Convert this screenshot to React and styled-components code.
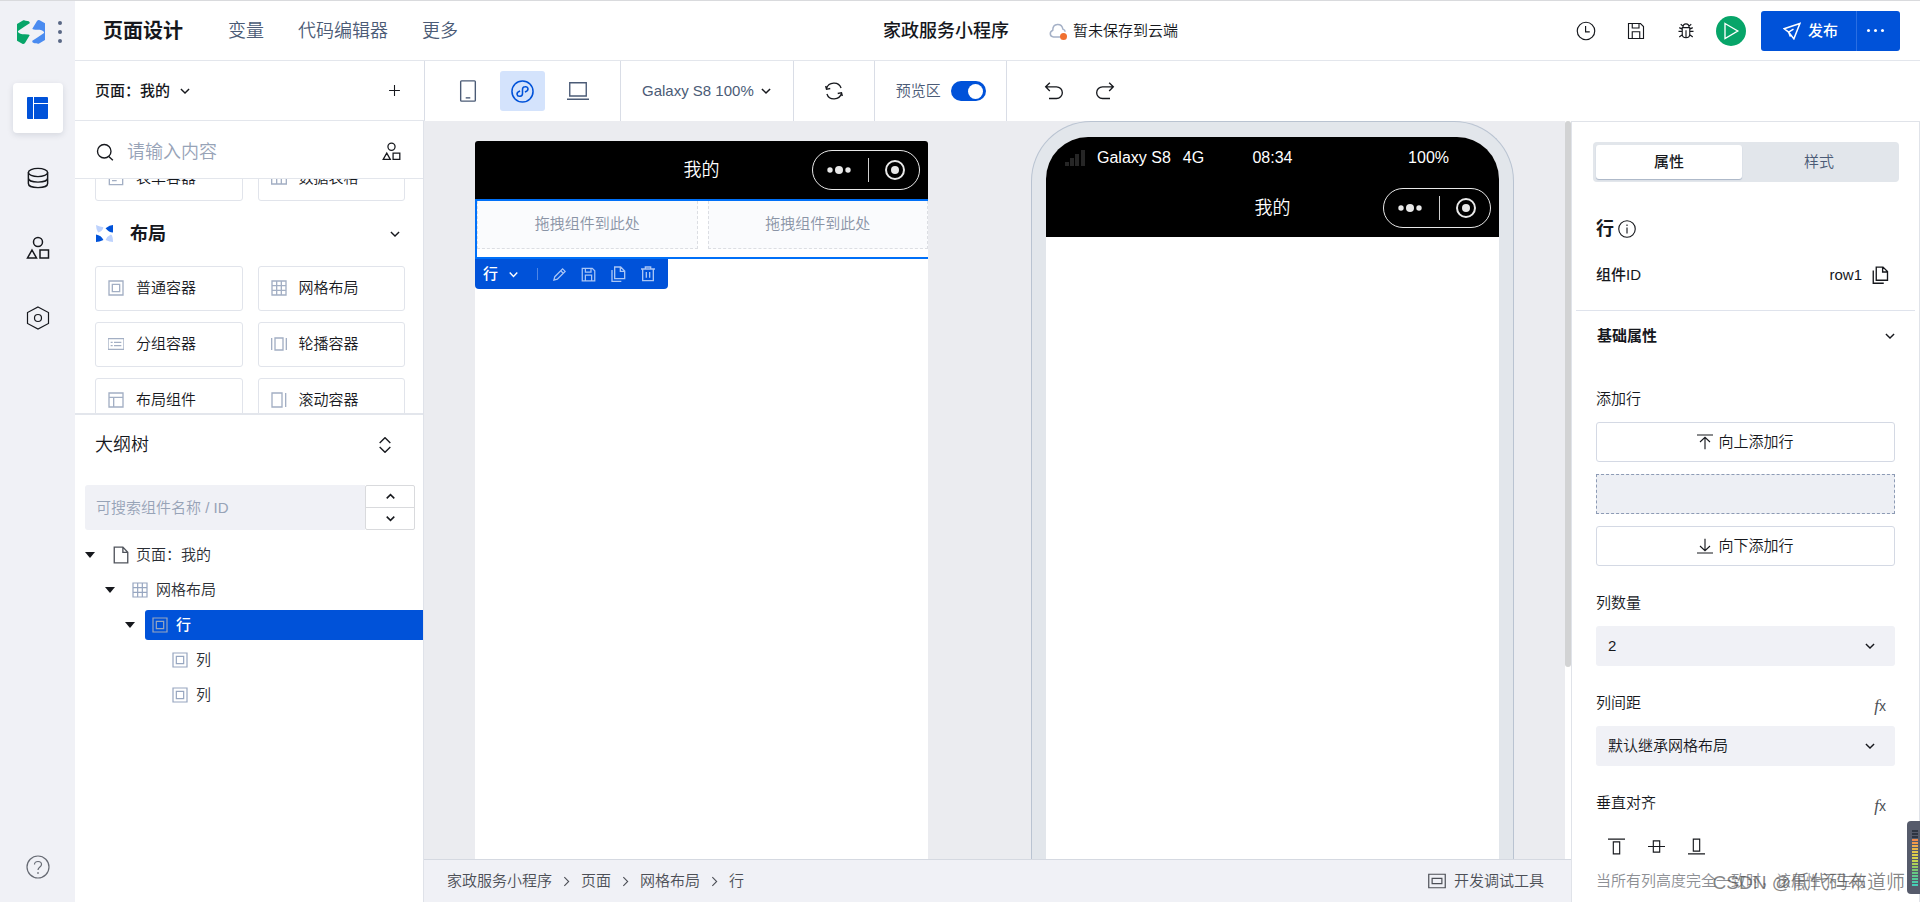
import { useEffect, useRef, useState } from "react";
import styled, { createGlobalStyle } from "styled-components";

const PARTIAL_ROW = [
  { name: "表单容器", icon: "form" },
  { name: "数据表格", icon: "table" },
];

const LAYOUT_ITEMS = [
  { name: "普通容器", icon: "box" },
  { name: "网格布局", icon: "grid" },
  { name: "分组容器", icon: "group" },
  { name: "轮播容器", icon: "carousel" },
  { name: "布局组件", icon: "layout" },
  { name: "滚动容器", icon: "scroll" },
];

const TREE = [
  { id: "page", name: "页面：我的", icon: "file", depth: 0, open: true },
  { id: "grid", name: "网格布局", icon: "grid", depth: 1, open: true },
  { id: "row1", name: "行", icon: "box", depth: 2, open: true },
  { id: "col1", name: "列", icon: "box", depth: 3 },
  { id: "col2", name: "列", icon: "box", depth: 3 },
];

const CRUMBS = ["家政服务小程序", "页面", "网格布局", "行"];

const METER = [
  "#2f3542", "#2f3542", "#2f3542", "#f08a4b", "#f09a4b", "#efac4b", "#e8b84a",
  "#e2c84a", "#dccf4b", "#d8d34c", "#c6d650", "#aed158", "#94cc62", "#7cc871",
  "#66c883", "#5fca8d", "#56cb97", "#4bcca8", "#45cdb6",
];

// every drawing sits on a 24 x 24 grid
const SHAPES = {
  database: (
    <>
      <ellipse cx="12" cy="6" rx="10.500" ry="4.500" />
      <path d="M1.500 6v12c0 2.500 4 4.500 10.500 4.500s10.500-2 10.500-4.500V6M1.500 12c0 2.500 4 4.500 10.500 4.500s10.500-2 10.500-4.500" />
    </>
  ),
  shapes: (
    <>
      <circle cx="12" cy="6" r="4.500" />
      <path d="M6 14l4.500 8h-9zM14 14h8.500v8H14z" />
    </>
  ),
  hexagon: (
    <>
      <path d="M12 1l10.500 5.500v11L12 23 1.500 17.500v-11z" />
      <circle cx="12" cy="12" r="3.500" />
    </>
  ),
  help: (
    <>
      <circle cx="12" cy="12" r="11" />
      <path d="M8.500 9.500c0-4 7-4 7 0 0 2.500-3.500 2.500-3.500 5.500M12 17v2" />
    </>
  ),
  search: (
    <>
      <circle cx="11" cy="11" r="9" />
      <path d="M17 18l5.500 5" />
    </>
  ),
  down: <path d="M5 8.500l7 7 7-7" />,
  up: <path d="M5 15.500l7-7 7 7" />,
  right: <path d="M8 4l8 8-8 8" />,
  plus: <path d="M12 2v20M2 12h20" />,
  updown: <path d="M4 9l8-8 8 8M4 15l8 8 8-8" />,
  phone: (
    <>
      <rect x="4" y="1" width="16" height="22" rx="1" />
      <path d="M9.500 19.500h5" />
    </>
  ),
  mini: (
    <>
      <circle cx="12" cy="12" r="11" />
      <path d="M9.500 11.500c-5 1.500-3.500 6 0 5.500 1.700-.3 2.500-1.500 2.500-3V10c0-1.700 1-3 2.500-3 3.500-.5 5 4 0 5.500" />
    </>
  ),
  laptop: <path d="M3 3h18v14.500H3zM0 21h24" />,
  refresh: <path d="M3 9C5.500 1 17.500 0 20.500 8.500M2 6l1 4 4.500-1M21 15c-2.500 8-14.500 9-17.500.5M22 18l-1-4-4.500 1" />,
  undo: <path d="M7 2L2 7l5 5M2.500 7H15a7 7 0 0 1 0 14H6" />,
  redo: <path d="M17 2l5 5-5 5M21.500 7H9a7 7 0 0 0 0 14h9" />,
  clock: (
    <>
      <circle cx="12" cy="12" r="10.500" />
      <path d="M11.500 6v7h5" />
    </>
  ),
  save: <path d="M2 2h16l4 4v16H2zM7 2v6h9V2M7 22v-9h10v9" />,
  bug: (
    <path d="M7 7.500h10v8.500c0 3-2 5-5 5s-5-2-5-5zM12 11v10M8 7c0-6 8-6 8 0M5 3l3 2.500M19 3l-3 2.500M2 12.500h5M17 12.500h5M3 7.500l4 2M21 7.500l-4 2M3 20l4-3M21 20l-4-3" />
  ),
  send: <path d="M22.500 2L1.500 9l6 4.500L14.500 22.500zM7.500 13.500L14 9.500M7.500 13.500l2.500 6" />,
  play: <path d="M4 2l17 10L4 22z" />,
  cloud: <path d="M15 20H6c-5-.5-6-6.500-1-9C5 1 17 1 18.500 9.500c2 .7 3 2 3 3.500" />,
  info: (
    <>
      <circle cx="12" cy="12" r="11" />
      <path d="M12 10v8M12 6v2" />
    </>
  ),
  copy: <path d="M7 1.500h9l6 6V19H7zM15.500 1.500v6.500H22M3 6v17h14" />,
  pencil: <path d="M3 21l1.500-5.500L17 3l4 4L8.500 19.500zM14 6l4 4" />,
  trash: <path d="M1.500 4.500h21M8 4.500V1.500h8v3M4 4.500V22h16V4.500M9.500 9v8.500M14.500 9v8.500" />,
  file: <path d="M3 1.500h11.500l6.500 7V22.500H3zM14.500 1.500v7H21" />,
  form: <path d="M2 2h20v20H2zM6 8h12M6 12h12M6 16h7" />,
  table: <path d="M1 3h22v18H1zM1 9h22M8.500 9v12M15.500 9v12" />,
  box: <path d="M1.500 1.500h21v21h-21zM6.500 6.500h11v11h-11z" />,
  grid: <path d="M1.500 1.500h21v21h-21zM1.500 8.500h21M1.500 15.500h21M8.500 1.500v21M15.500 1.500v21" />,
  group: <path d="M0 4h24v16H0zM4 9.500h3M9 9.500h11M4 14.500h3M9 14.500h11" />,
  carousel: <path d="M6 3h12v18H6zM1 3v18M23 3v18" />,
  layout: <path d="M1.500 1.500h21v21h-21zM1.500 8h21M8.500 8v14.500" />,
  scroll: <path d="M1.500 1.500h15v21h-15zM22 1.500v21" />,
  addUp: <path d="M0 1.500h24M12 23V5M4.500 12L12 5l7.500 7" />,
  addDown: <path d="M0 22.500h24M12 1v18M4.500 12l7.500 7 7.500-7" />,
  alignTop: <path d="M0 1.500h24M7.500 5.500h9v17h-9z" />,
  alignMiddle: <path d="M0 12h24M7.500 4h9v16h-9z" />,
  alignBottom: <path d="M0 22.500h24M7.500 1.500h9v17h-9z" />,
  devtool: <path d="M1 3h22v18H1zM5.500 8.500h13v7h-13z" />,
};

function Icon({ name, size = 16, weight = 2 }) {
  return (
    <S.Svg width={size} height={size} viewBox="0 0 24 24" strokeWidth={weight} aria-hidden="true">
      {SHAPES[name]}
    </S.Svg>
  );
}

function LogoHalf() {
  return (
    <path d="M0 12L19 1q3-1 7 1q14 0 12 8L24 19 3 33q-2 6 13 10q20-1 22 3L24 69q-4 4-8 2L0 62z" />
  );
}

function Rail() {
  return (
    <S.Rail>
      <S.Brand>
        <svg width="28" height="24" viewBox="0 0 84 72" aria-hidden="true">
          <g fill="#07a569"><LogoHalf /></g>
          <g fill="#4a8bf0" transform="rotate(180 42 36)"><LogoHalf /></g>
        </svg>
        <S.Dots><i /><i /><i /></S.Dots>
      </S.Brand>
      <S.RailButton $active aria-label="页面设计">
        <svg width="21" height="22" viewBox="0 0 21 22" aria-hidden="true">
          <path d="M1 0h5v22H1q-1 0-1-1V1q0-1 1-1zM7 0h13q1 0 1 1v5H7zM7 7h14v14q0 1-1 1H7z" fill="#0052d9" />
        </svg>
      </S.RailButton>
      <S.RailButton aria-label="数据源"><Icon name="database" size={22} weight={1.6} /></S.RailButton>
      <S.RailButton aria-label="组件库"><Icon name="shapes" size={24} weight={1.5} /></S.RailButton>
      <S.RailButton aria-label="设置"><Icon name="hexagon" size={24} weight={1.2} /></S.RailButton>
      <S.RailHelp aria-label="帮助"><Icon name="help" size={24} weight={1.2} /></S.RailHelp>
    </S.Rail>
  );
}

function Header() {
  return (
    <S.Header>
      <S.Nav>
        <S.NavLink href="#design" $active>页面设计</S.NavLink>
        <S.NavLink href="#vars">变量</S.NavLink>
        <S.NavLink href="#code">代码编辑器</S.NavLink>
        <S.NavLink href="#more">更多</S.NavLink>
      </S.Nav>
      <S.Project>
        <h1>家政服务小程序</h1>
        <S.CloudState>
          <S.Cloud><Icon name="cloud" size={18} /></S.Cloud>
          暂未保存到云端
        </S.CloudState>
      </S.Project>
      <S.Actions>
        <S.IconButton aria-label="历史"><Icon name="clock" size={20} weight={1.4} /></S.IconButton>
        <S.IconButton aria-label="保存"><Icon name="save" size={18} weight={1.5} /></S.IconButton>
        <S.IconButton aria-label="调试"><Icon name="bug" size={18} weight={1.5} /></S.IconButton>
        <S.PlayButton aria-label="预览"><Icon name="play" size={18} weight={1.8} /></S.PlayButton>
        <S.Publish>
          <button><Icon name="send" size={18} /> 发布</button>
          <button aria-label="更多操作"><S.WhiteDots><i /><i /><i /></S.WhiteDots></button>
        </S.Publish>
      </S.Actions>
    </S.Header>
  );
}

function Toolbar() {
  const [preview, setPreview] = useState(true);
  return (
    <S.Toolbar>
      <S.Devices>
        <S.Device aria-label="手机"><Icon name="phone" size={22} weight={1.5} /></S.Device>
        <S.Device $active aria-label="小程序"><Icon name="mini" size={23} weight={1.6} /></S.Device>
        <S.Device aria-label="电脑"><Icon name="laptop" size={22} weight={1.5} /></S.Device>
      </S.Devices>
      <S.ToolGroup>
        <S.DeviceName>Galaxy S8 100% <Icon name="down" size={14} weight={2.6} /></S.DeviceName>
      </S.ToolGroup>
      <S.ToolGroup>
        <S.IconButton aria-label="刷新"><Icon name="refresh" size={20} weight={1.6} /></S.IconButton>
      </S.ToolGroup>
      <S.ToolGroup>
        <S.SwitchLabel>
          预览区
          <S.Switch type="checkbox" checked={preview} onChange={() => setPreview(!preview)} />
        </S.SwitchLabel>
      </S.ToolGroup>
      <S.History>
        <S.IconButton aria-label="撤销"><Icon name="undo" size={20} weight={1.6} /></S.IconButton>
        <S.IconButton aria-label="重做"><Icon name="redo" size={20} weight={1.6} /></S.IconButton>
      </S.History>
    </S.Toolbar>
  );
}

function Library() {
  const listRef = useRef(null);

  useEffect(() => {
    listRef.current.scrollTop = 23;
  }, []);

  return (
    <>
      <S.SearchRow>
        <Icon name="search" size={18} weight={1.8} />
        <input type="text" aria-label="搜索组件" placeholder="请输入内容" />
        <S.IconButton aria-label="组件分类"><Icon name="shapes" size={19} weight={1.6} /></S.IconButton>
      </S.SearchRow>
      <S.Library ref={listRef}>
        <S.Cards>
          {PARTIAL_ROW.map((item) => (
            <S.Card key={item.name}><Icon name={item.icon} size={16} />{item.name}</S.Card>
          ))}
        </S.Cards>
        <S.SectionTitle>
          <svg width="17" height="17" viewBox="0 0 16 16" aria-hidden="true">
            <path d="M0 0q4 2 7 2-1 4-5 5Q0 4 0 0zM16 16q0-6-2-7-4 2-5 5 4 2 7 2z" fill="#bdd2fd" />
            <path d="M16 0v7q-4 0-7-4 4-3 7-3zM0 16V9q5 1 7 5-4 2-7 2z" fill="#0052d9" />
          </svg>
          <h2>布局</h2>
          <Icon name="down" size={14} weight={2.4} />
        </S.SectionTitle>
        <S.Cards>
          {LAYOUT_ITEMS.map((item) => (
            <S.Card key={item.name}><Icon name={item.icon} size={16} />{item.name}</S.Card>
          ))}
        </S.Cards>
      </S.Library>
    </>
  );
}

function Outline() {
  const [selected, setSelected] = useState("row1");
  return (
    <S.Outline>
      <S.OutlineHead>
        <h2>大纲树</h2>
        <S.IconButton aria-label="展开收起"><Icon name="updown" size={16} /></S.IconButton>
      </S.OutlineHead>
      <S.OutlineSearch>
        <input type="text" aria-label="搜索大纲" placeholder="可搜索组件名称 / ID" />
        <S.Stepper>
          <button aria-label="上一个"><Icon name="up" size={13} weight={2.8} /></button>
          <button aria-label="下一个"><Icon name="down" size={13} weight={2.8} /></button>
        </S.Stepper>
      </S.OutlineSearch>
      <S.Tree>
        {TREE.map((node) => (
          <S.TreeRow key={node.id} $depth={node.depth}>
            <S.Caret $open={node.open} />
            <S.TreeLabel
              $active={selected === node.id}
              $dark={node.icon === "file"}
              onClick={() => setSelected(node.id)}
            >
              <Icon name={node.icon} size={node.icon === "file" ? 18 : 16} weight={1.8} />
              {node.name}
            </S.TreeLabel>
          </S.TreeRow>
        ))}
      </S.Tree>
    </S.Outline>
  );
}

function Capsule() {
  return (
    <S.Capsule>
      <svg width="24" height="8" viewBox="0 0 24 8" fill="#e8e8e8" aria-hidden="true">
        <circle cx="3" cy="4" r="2.700" />
        <circle cx="12" cy="4" r="4" />
        <circle cx="21" cy="4" r="2.700" />
      </svg>
      <hr />
      <svg width="20" height="20" viewBox="0 0 20 20" aria-hidden="true">
        <circle cx="10" cy="10" r="9" fill="none" stroke="#e8e8e8" strokeWidth="2" />
        <circle cx="10" cy="10" r="4" fill="#e8e8e8" />
      </svg>
    </S.Capsule>
  );
}

function Canvas() {
  return (
    <S.CanvasArea>
      <S.Stage>
        <S.Editor>
          <S.TitleBar>
            <span>我的</span>
            <Capsule />
          </S.TitleBar>
          <S.SelectedRow>
            <S.Slot>拖拽组件到此处</S.Slot>
            <S.Slot>拖拽组件到此处</S.Slot>
          </S.SelectedRow>
          <S.RowTools>
            <S.RowName>行 <Icon name="down" size={13} weight={2.6} /></S.RowName>
            <hr />
            <button aria-label="编辑"><Icon name="pencil" size={15} /></button>
            <button aria-label="保存"><Icon name="save" size={15} /></button>
            <button aria-label="复制"><Icon name="copy" size={16} /></button>
            <button aria-label="删除"><Icon name="trash" size={16} /></button>
          </S.RowTools>
        </S.Editor>
        <S.PhoneFrame>
          <S.PhoneScreen>
            <S.StatusBar>
              <S.Carrier>
                <svg width="20" height="16" viewBox="0 0 20 16" fill="#262626" aria-hidden="true">
                  <path d="M0 12h4v4H0zM5 8h4v8H5zM10 4h4v12h-4zM16 0h4v16h-4z" />
                </svg>
                <span>Galaxy S8</span>
                <span>4G</span>
              </S.Carrier>
              <span>08:34</span>
              <S.Battery>100%</S.Battery>
            </S.StatusBar>
            <S.TitleBar>
              <span>我的</span>
              <Capsule />
            </S.TitleBar>
          </S.PhoneScreen>
        </S.PhoneFrame>
      </S.Stage>
      <S.Track><div /></S.Track>
      <S.Footer>
        <S.Crumbs aria-label="组件路径">
          {CRUMBS.map((name, i) => (
            <S.Crumb key={name}>
              {i > 0 && <Icon name="right" size={13} />}
              <a href={`#crumb-${i}`}>{name}</a>
            </S.Crumb>
          ))}
        </S.Crumbs>
        <S.DevTool><Icon name="devtool" size={18} weight={1.6} /> 开发调试工具</S.DevTool>
      </S.Footer>
    </S.CanvasArea>
  );
}

function SelectField({ id, label, value, fx }) {
  return (
    <S.Field>
      <S.FieldHead>
        <label htmlFor={id}>{label}</label>
        {fx && <S.Fx aria-label="绑定表达式"><i>f</i>x</S.Fx>}
      </S.FieldHead>
      <S.SelectBox>
        <select id={id} defaultValue={value}>
          <option>{value}</option>
        </select>
        <Icon name="down" size={14} weight={2.4} />
      </S.SelectBox>
    </S.Field>
  );
}

function Inspector() {
  return (
    <S.Inspector>
      <S.InspectorTop>
        <S.Tabs role="tablist">
          <S.Tab role="tab" aria-selected="true" $active>属性</S.Tab>
          <S.Tab role="tab" aria-selected="false">样式</S.Tab>
        </S.Tabs>
        <S.CompName><h2>行</h2><Icon name="info" size={18} weight={1.5} /></S.CompName>
        <S.CompId>
          <strong>组件ID</strong>
          <span>row1</span>
          <button aria-label="复制ID"><Icon name="copy" size={18} weight={1.8} /></button>
        </S.CompId>
      </S.InspectorTop>
      <S.GroupHead>
        <h3>基础属性</h3>
        <Icon name="down" size={14} weight={2.4} />
      </S.GroupHead>
      <S.Fields>
        <S.Field>
          <S.FieldHead>添加行</S.FieldHead>
          <S.AddRows>
            <button><Icon name="addUp" size={16} weight={1.7} /> 向上添加行</button>
            <S.RowMark />
            <button><Icon name="addDown" size={16} weight={1.7} /> 向下添加行</button>
          </S.AddRows>
        </S.Field>
        <SelectField id="col-count" label="列数量" value="2" />
        <SelectField id="col-gap" label="列间距" value="默认继承网格布局" fx />
        <S.Field>
          <S.FieldHead>
            垂直对齐
            <S.Fx aria-label="绑定表达式"><i>f</i>x</S.Fx>
          </S.FieldHead>
          <S.Aligns>
            <button aria-label="顶部对齐"><Icon name="alignTop" size={17} weight={1.6} /></button>
            <button aria-label="居中对齐"><Icon name="alignMiddle" size={17} weight={1.6} /></button>
            <button aria-label="底部对齐"><Icon name="alignBottom" size={17} weight={1.6} /></button>
          </S.Aligns>
          <S.Hint>当所有列高度完全一致时，该属性不生效</S.Hint>
        </S.Field>
      </S.Fields>
    </S.Inspector>
  );
}

export default function App() {
  return (
    <S.App>
      <GlobalStyle />
      <Rail />
      <S.Main>
        <Header />
        <S.SubHeader>
          <S.PageBar>
            <S.PageSelect>页面：我的 <Icon name="down" size={14} weight={2.4} /></S.PageSelect>
            <S.IconButton aria-label="新建页面"><Icon name="plus" size={13} /></S.IconButton>
          </S.PageBar>
          <Toolbar />
        </S.SubHeader>
        <S.Body>
          <S.SidePanel>
            <Library />
            <Outline />
          </S.SidePanel>
          <Canvas />
          <Inspector />
        </S.Body>
      </S.Main>
      <S.Credit>CSDN @低代码布道师</S.Credit>
      <S.Meter>
        {METER.map((color, i) => (
          <S.MeterBar key={i} $color={color} />
        ))}
      </S.Meter>
    </S.App>
  );
}

const GlobalStyle = createGlobalStyle`
  * {
    box-sizing: border-box;
  }

  body {
    margin: 0;
    color: #16181d;
    font-family: "Liberation Sans", "Noto Sans CJK SC", sans-serif;
    font-size: 15px;
    font-weight: 350;
    line-height: 20px;
  }

  h1, h2, h3 {
    margin: 0;
    font-size: 18px;
    line-height: 24px;
  }

  button, input, select {
    margin: 0;
    padding: 0;
    border: 0;
    outline: 0;
    background: none;
    color: inherit;
    font: inherit;
  }

  a {
    color: inherit;
    text-decoration: none;
  }

  hr {
    margin: 0;
    border: 0;
  }
`;

const S = {
  App: styled.div`
    display: flex;
    height: 100vh;
    overflow: hidden;
    border-top: 1px solid #d9dadd;
    background: #fff;
  `,
  Svg: styled.svg`
    flex: none;
    fill: none;
    stroke: currentColor;
  `,
  Main: styled.div`
    display: flex;
    flex: 1;
    flex-direction: column;
    min-width: 0;
  `,
  Rail: styled.nav`
    display: flex;
    flex: none;
    flex-direction: column;
    align-items: center;
    gap: 20px;
    width: 75px;
    padding-bottom: 10px;
    background: #f0f1f6;
  `,
  Brand: styled.div`
    display: flex;
    align-items: center;
    gap: 13px;
    height: 62px;
    padding-left: 4px;
  `,
  Dots: styled.span`
    display: flex;
    flex-direction: column;
    gap: 5px;

    i {
      width: 4px;
      height: 4px;
      border-radius: 50%;
      background: #596785;
    }
  `,
  RailButton: styled.button`
    display: grid;
    place-items: center;
    width: 50px;
    height: 50px;
    border-radius: 4px;
    background: ${(p) => (p.$active ? "#fff" : "none")};
    box-shadow: ${(p) => (p.$active ? "0 2px 6px rgba(20, 30, 60, 0.12)" : "none")};
  `,
  RailHelp: styled.button`
    display: grid;
    place-items: center;
    width: 50px;
    height: 50px;
    margin-top: auto;
    color: #666a73;
  `,
  Header: styled.header`
    display: flex;
    flex: none;
    align-items: center;
    height: 60px;
    padding: 0 20px 0 28px;
    border-bottom: 1px solid #e3e6ec;
  `,
  Nav: styled.nav`
    display: flex;
    align-items: center;
    gap: 34px;
  `,
  NavLink: styled.a`
    margin-right: ${(p) => (p.$active ? "11px" : "0")};
    color: ${(p) => (p.$active ? "#16181d" : "#4b5b76")};
    font-size: ${(p) => (p.$active ? "20px" : "18px")};
    font-weight: ${(p) => (p.$active ? 700 : 350)};
    line-height: 28px;
  `,
  Project: styled.div`
    display: flex;
    flex: 1;
    align-items: center;
    justify-content: center;
    gap: 40px;
    padding-left: 27px;

    h1 {
      font-weight: 500;
    }
  `,
  CloudState: styled.span`
    display: flex;
    align-items: center;
    gap: 6px;
  `,
  Cloud: styled.span`
    position: relative;
    display: flex;
    color: #a5b1c7;

    &::after {
      content: "";
      position: absolute;
      right: 0;
      bottom: 0;
      width: 7px;
      height: 7px;
      border-radius: 50%;
      background: #f07030;
    }
  `,
  Actions: styled.div`
    display: flex;
    align-items: center;
    gap: 30px;
  `,
  IconButton: styled.button`
    display: grid;
    flex: none;
    place-items: center;
    width: 20px;
    height: 20px;
  `,
  PlayButton: styled.button`
    display: grid;
    place-items: center;
    width: 30px;
    height: 30px;
    margin: 0 -15px 0 -10px;
    border-radius: 50%;
    background: #07a569;
    color: #fff;
  `,
  Publish: styled.div`
    display: flex;
    overflow: hidden;
    height: 40px;
    border-radius: 3px;
    background: #0052d9;
    color: #fff;

    button {
      display: flex;
      align-items: center;
      justify-content: center;
      gap: 7px;
      width: 95px;
      padding-left: 4px;
      font-weight: 500;
    }

    button + button {
      width: 44px;
      padding: 0 6px 0 0;
      border-left: 1px solid #2a6ee2;
    }
  `,
  WhiteDots: styled.span`
    display: flex;
    gap: 4px;

    i {
      width: 3px;
      height: 3px;
      border-radius: 50%;
      background: #fff;
    }
  `,
  SubHeader: styled.div`
    display: flex;
    flex: none;
    height: 60px;
  `,
  PageBar: styled.div`
    display: flex;
    flex: none;
    align-items: center;
    justify-content: space-between;
    width: 350px;
    padding: 0 20px;
    border-right: 1px solid #d9dde6;
    border-bottom: 1px solid #e3e6ec;
  `,
  PageSelect: styled.button`
    display: flex;
    align-items: center;
    gap: 8px;
    font-weight: 500;
  `,
  Toolbar: styled.div`
    display: flex;
    flex: 1;
  `,
  ToolGroup: styled.div`
    display: flex;
    align-items: center;
    padding: 0 20px 0 21px;
    border-right: 1px solid #d9dde6;

    & > ${() => S.IconButton} {
      width: 39px;
    }
  `,
  Devices: styled.div`
    display: flex;
    align-items: center;
    gap: 10px;
    padding: 0 20px;
    border-right: 1px solid #d9dde6;
  `,
  Device: styled.button`
    display: grid;
    place-items: center;
    width: 45px;
    height: 40px;
    border-radius: 3px;
    background: ${(p) => (p.$active ? "#d4e3fc" : "none")};
    color: ${(p) => (p.$active ? "#0052d9" : "#4b5b76")};
  `,
  DeviceName: styled.button`
    display: flex;
    align-items: center;
    gap: 5px;
    color: #4b5b76;

    svg {
      color: #16181d;
    }
  `,
  SwitchLabel: styled.label`
    display: flex;
    align-items: center;
    gap: 10px;
    color: #4b5b76;
  `,
  Switch: styled.input`
    appearance: none;
    display: flex;
    align-items: center;
    width: 35px;
    height: 20px;
    padding: 0 3px;
    border-radius: 10px;
    background: #b8c0cc;

    &::before {
      content: "";
      width: 15px;
      height: 15px;
      border-radius: 50%;
      background: #fff;
    }

    &:checked {
      justify-content: flex-end;
      background: #0052d9;
    }
  `,
  History: styled.div`
    display: flex;
    align-items: center;
    gap: 31px;
    padding-left: 37px;
  `,
  Body: styled.div`
    display: flex;
    flex: 1;
    min-height: 0;
  `,
  SidePanel: styled.aside`
    display: flex;
    flex: none;
    flex-direction: column;
    width: 349px;
    border-right: 1px solid #dfe2e9;
  `,
  SearchRow: styled.div`
    display: flex;
    flex: none;
    align-items: center;
    gap: 13px;
    height: 58px;
    padding: 4px 22px 0 21px;
    border-bottom: 1px solid #e3e6ec;

    input {
      flex: 1;
      min-width: 0;
      font-size: 18px;
      line-height: 24px;
    }

    input::placeholder {
      color: #97a3b7;
    }
  `,
  Library: styled.div`
    flex: none;
    height: 236px;
    overflow-y: auto;
    border-bottom: 2px solid #e3e6ec;
    scrollbar-width: none;
  `,
  Cards: styled.div`
    display: grid;
    grid-template-columns: 1fr 1fr;
    gap: 11px 15px;
    padding: 0 18px 0 20px;
  `,
  Card: styled.button`
    display: flex;
    align-items: center;
    gap: 12px;
    height: 45px;
    padding: 0 0 1px 12px;
    border: 1px solid #e1e4eb;
    border-radius: 3px;

    svg {
      color: #a3afc4;
    }
  `,
  SectionTitle: styled.div`
    display: flex;
    align-items: center;
    height: 65px;
    padding: 0 21px;

    h2 {
      flex: 1;
      margin-left: 17px;
    }
  `,
  Outline: styled.section`
    flex: 1;
  `,
  OutlineHead: styled.div`
    display: flex;
    align-items: center;
    justify-content: space-between;
    height: 60px;
    padding: 0 28px 0 20px;

    h2 {
      font-weight: 350;
    }
  `,
  OutlineSearch: styled.div`
    display: flex;
    height: 45px;
    margin: 10px 8px 10px 10px;

    input {
      flex: 1;
      min-width: 0;
      padding-left: 11px;
      border-radius: 3px 0 0 3px;
      background: #f0f1f6;
    }

    input::placeholder {
      color: #97a3b7;
    }
  `,
  Stepper: styled.div`
    display: flex;
    flex-direction: column;
    width: 50px;
    border: 1px solid #d9dadd;
    border-radius: 2px;

    button {
      display: grid;
      flex: 1;
      place-items: center;
    }

    button + button {
      border-top: 1px solid #d9dadd;
    }
  `,
  Tree: styled.div`
    display: flex;
    flex-direction: column;
    gap: 5px;
  `,
  TreeRow: styled.div`
    display: flex;
    align-items: center;
    height: 30px;
    padding-left: ${(p) => p.$depth * 20 + 10}px;
  `,
  Caret: styled.span`
    width: 10px;
    height: 6px;
    margin-right: 10px;
    background: ${(p) => (p.$open ? "#16181d" : "none")};
    clip-path: polygon(0 0, 100% 0, 50% 100%);
  `,
  TreeLabel: styled.button`
    display: flex;
    flex: 1;
    align-items: center;
    gap: ${(p) => (p.$dark ? "6px" : "8px")};
    height: 30px;
    padding-left: 7px;
    border-radius: 3px 0 0 3px;
    background: ${(p) => (p.$active ? "#0052d9" : "none")};
    color: ${(p) => (p.$active ? "#fff" : "#2b2e35")};
    font-weight: ${(p) => (p.$active ? 500 : 350)};

    svg {
      color: ${(p) => (p.$dark ? "#50545c" : "#97a6c0")};
    }
  `,
  CanvasArea: styled.main`
    display: grid;
    flex: 1;
    grid-template-columns: 1fr 6px;
    grid-template-rows: 1fr 43px;
    min-width: 0;
    min-height: 0;
  `,
  Stage: styled.div`
    display: flex;
    justify-content: space-between;
    min-height: 0;
    overflow: hidden;
    padding: 0 51px;
    background: #ebecf0;
  `,
  Track: styled.div`
    background: #fff;

    div {
      height: 74%;
      border-radius: 3px;
      background: #d2d3d4;
    }
  `,
  Editor: styled.div`
    display: flex;
    flex-direction: column;
    align-items: flex-start;
    width: 453px;
    margin-top: 20px;
    border-radius: 3px 3px 0 0;
    overflow: hidden;
    background: #fff;
  `,
  TitleBar: styled.div`
    display: grid;
    grid-template-columns: 1fr auto 1fr;
    align-items: center;
    width: 100%;
    height: 58px;
    padding: 0 8px;
    background: #000;
    color: #fff;
    font-size: 18px;

    span {
      grid-column: 2;
    }
  `,
  Capsule: styled.div`
    display: flex;
    align-items: center;
    justify-content: space-between;
    justify-self: end;
    width: 108px;
    height: 40px;
    padding: 0 14px;
    border: 1px solid #e8e8e8;
    border-radius: 20px;

    hr {
      width: 1px;
      height: 24px;
      background: #d0d0d0;
    }
  `,
  SelectedRow: styled.div`
    display: flex;
    gap: 10px;
    width: 100%;
    height: 60px;
    padding-bottom: 8px;
    border: 2px solid #0070f8;
    border-right: 0;
  `,
  Slot: styled.div`
    display: grid;
    flex: 1;
    place-items: center;
    padding-bottom: 1px;
    border: 1px dashed #dcdee3;
    border-top: 0;
    background: #fafbfd;
    color: #8a94a6;
  `,
  RowTools: styled.div`
    display: flex;
    align-items: center;
    gap: 14px;
    height: 30px;
    padding: 0 12px 0 8px;
    border-radius: 0 0 4px 4px;
    background: #0052d9;
    color: #a9c5f5;

    button {
      display: flex;
    }

    hr {
      width: 1px;
      height: 12px;
      background: #4e86e6;
    }
  `,
  RowName: styled.button`
    align-items: center;
    gap: 9px;
    margin-right: 3px;
    color: #fff;
    font-weight: 500;
  `,
  PhoneFrame: styled.div`
    width: 483px;
    padding: 15px 14px 0;
    border: 1px solid #b9c3d1;
    border-bottom: 0;
    border-radius: 60px 60px 0 0;
    background: #e2e6eb;
  `,
  PhoneScreen: styled.div`
    overflow: hidden;
    height: 100%;
    border-radius: 42px 42px 0 0;
    background: #fff;
  `,
  StatusBar: styled.div`
    display: grid;
    grid-template-columns: 1fr auto 1fr;
    align-items: center;
    height: 42px;
    padding: 0 50px 0 19px;
    background: #000;
    color: #fff;
    font-size: 16px;

    & > span {
      margin-left: 31px;
    }
  `,
  Carrier: styled.div`
    display: flex;
    align-items: center;
    gap: 12px;
  `,
  Battery: styled.div`
    text-align: right;
  `,
  Footer: styled.footer`
    display: flex;
    grid-column: 1 / -1;
    align-items: center;
    justify-content: space-between;
    padding: 0 27px 0 23px;
    border-top: 1px solid #d5d9e1;
    background: #f0f1f6;
    color: #4c4f56;
  `,
  Crumbs: styled.nav`
    display: flex;
    gap: 8px;
  `,
  Crumb: styled.span`
    display: flex;
    align-items: center;
    gap: 8px;
  `,
  DevTool: styled.button`
    display: flex;
    align-items: center;
    gap: 8px;
  `,
  Inspector: styled.aside`
    flex: none;
    width: 349px;
    overflow: hidden;
    border: 1px solid #e0e3e9;
    border-bottom: 0;
  `,
  InspectorTop: styled.div`
    margin: 0 4px;
    padding: 20px 16px 0 17px;
    border-bottom: 1px solid #dfe3ec;
  `,
  Tabs: styled.div`
    display: grid;
    grid-template-columns: 146px 1fr;
    height: 40px;
    padding: 3px;
    border-radius: 4px;
    background: #e2e6eb;
  `,
  Tab: styled.button`
    border-radius: 3px;
    background: ${(p) => (p.$active ? "#fff" : "none")};
    box-shadow: ${(p) => (p.$active ? "0 1px 1px #a9b4c6" : "none")};
    color: ${(p) => (p.$active ? "#16181d" : "#4b5b76")};
    font-weight: ${(p) => (p.$active ? 500 : 350)};
  `,
  CompName: styled.div`
    display: flex;
    align-items: center;
    gap: 4px;
    height: 24px;
    margin: 35px 3px 24px;
  `,
  CompId: styled.div`
    display: flex;
    align-items: center;
    gap: 9px;
    margin-bottom: 25px;
    padding: 0 10px 0 3px;

    strong {
      flex: 1;
      font-weight: 500;
    }

    button {
      display: flex;
    }
  `,
  GroupHead: styled.div`
    display: flex;
    align-items: center;
    justify-content: space-between;
    height: 50px;
    padding: 0 22px 0 25px;

    h3 {
      font-size: 15px;
    }
  `,
  Fields: styled.div`
    display: flex;
    flex-direction: column;
    gap: 27px;
    padding: 28px 24px 0 24px;
  `,
  Field: styled.div`
    display: flex;
    flex-direction: column;
    gap: 13px;
  `,
  FieldHead: styled.div`
    display: flex;
    justify-content: space-between;
    height: 20px;
  `,
  AddRows: styled.div`
    display: flex;
    flex-direction: column;
    gap: 12px;

    button {
      display: flex;
      align-items: center;
      justify-content: center;
      gap: 5px;
      height: 40px;
      border: 1px solid #d4d9e4;
      border-radius: 3px;
    }
  `,
  RowMark: styled.div`
    height: 40px;
    border: 1px dashed #8d9bb5;
    background: #edeff4;
  `,
  SelectBox: styled.div`
    display: flex;
    align-items: center;
    height: 40px;
    border-radius: 3px;
    background: #f0f1f6;

    select {
      appearance: none;
      width: 100%;
      height: 40px;
      padding-left: 12px;
    }

    svg {
      margin: 0 18px 0 -32px;
      pointer-events: none;
    }
  `,
  Fx: styled.button`
    height: 26px;
    margin-right: 9px;
    color: #4c4f56;
    font-size: 14px;

    i {
      font-family: "Liberation Serif", serif;
      font-size: 17px;
    }
  `,
  Aligns: styled.div`
    display: flex;
    gap: 23px;
    height: 40px;
    padding-left: 12px;

    button {
      display: flex;
      align-items: center;
    }
  `,
  Hint: styled.p`
    margin: -8px 0 0;
    color: #8d8f94;
    white-space: nowrap;
  `,
  Credit: styled.div`
    position: absolute;
    right: 15px;
    bottom: 7px;
    color: rgba(80, 80, 80, 0.7);
    font-size: 19px;
    line-height: 24px;
  `,
  Meter: styled.div`
    position: absolute;
    right: 0;
    bottom: 8px;
    display: flex;
    flex-direction: column;
    gap: 1px;
    padding: 9px 2px 8px 5px;
    border-radius: 4px 0 0 4px;
    background: #565b6b;
  `,
  MeterBar: styled.span`
    width: 6px;
    height: 2px;
    background: ${(p) => p.$color};
  `,
};
